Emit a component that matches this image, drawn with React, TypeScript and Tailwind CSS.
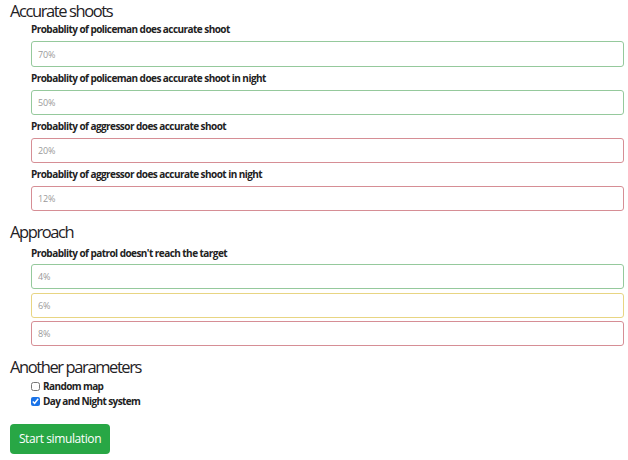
const green = "border-[#95c99c]";
const red = "border-[#d68e95]";
const yellow = "border-[#e8d583]";

function Label({ children, className = "" }: { children: React.ReactNode; className?: string }) {
  return (
    <div className={`h-[14px] text-[10px] font-bold leading-[14px] tracking-[-0.55px] text-[#222] ${className}`}>
      {children}
    </div>
  );
}

function Field({ value, border, className = "" }: { value: string; border: string; className?: string }) {
  return (
    <input
      readOnly
      placeholder={value}
      className={`block h-[25px] w-full rounded-[3px] border ${border} bg-white px-[6px] text-[9px] tracking-[-0.2px] text-[#555] outline-none placeholder:text-[#9a9a9a] ${className}`}
    />
  );
}

function Heading({ children, className = "" }: { children: React.ReactNode; className?: string }) {
  return (
    <h3 className={`h-[22px] text-[16.5px] leading-[22px] tracking-[-1.4px] text-[#1f2225] ${className}`}>{children}</h3>
  );
}

export default function App() {
  return (
    <div
      className="h-[460px] w-[628px] overflow-hidden bg-white pl-[10px] pr-[4px]"
      style={{ fontFamily: '"Open Sans", "Noto Sans", sans-serif' }}
    >
      <Heading>Accurate shoots</Heading>
      <div className="pl-[21px]">
        <Label>Probablity of policeman does accurate shoot</Label>
        <Field value="70%" border={green} className="mt-[5px] h-[26px]" />
        <Label className="mt-[4px]">Probablity of policeman does accurate shoot in night</Label>
        <Field value="50%" border={green} className="mt-[5px]" />
        <Label className="mt-[4px]">Probablity of aggressor does accurate shoot</Label>
        <Field value="20%" border={red} className="mt-[5px] h-[24px]" />
        <Label className="mt-[4px]">Probablity of aggressor does accurate shoot in night</Label>
        <Field value="12%" border={red} className="mt-[5px]" />
      </div>

      <Heading className="mt-[10px]">Approach</Heading>
      <div className="pl-[21px]">
        <Label className="mt-[3px]">Probablity of patrol doesn't reach the target</Label>
        <Field value="4%" border={green} className="mt-[4px]" />
        <Field value="6%" border={yellow} className="mt-[4px] h-[23px]" />
        <Field value="8%" border={red} className="mt-[3px]" />
      </div>

      <Heading className="mt-[10px]">Another parameters</Heading>
      <div className="mt-[1px] pl-[21px]">
        <label className="flex h-[15px] items-center gap-[3px] text-[10px] font-bold tracking-[-0.6px] text-[#222]">
          <input type="checkbox" className="m-0 h-[9px] w-[9px]" />
          Random map
        </label>
        <label className="flex h-[15px] items-center gap-[3px] text-[10px] font-bold tracking-[-0.6px] text-[#222]">
          <input type="checkbox" defaultChecked className="m-0 h-[9px] w-[9px] accent-[#1a73e8]" />
          Day and Night system
        </label>
      </div>

      <button className="mt-[15px] flex h-[30px] w-[100px] items-center justify-center rounded-[4px] bg-[#28a745] text-[12px] tracking-[-0.4px] text-white">
        Start simulation
      </button>
    </div>
  );
}
